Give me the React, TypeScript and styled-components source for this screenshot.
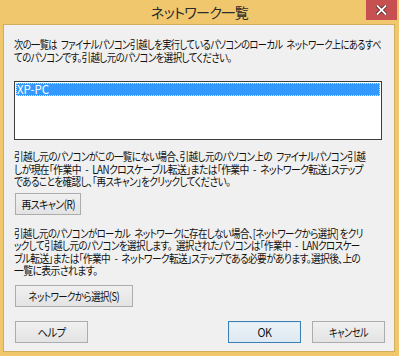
import { useLayoutEffect, useRef, useState, ReactNode } from "react"
import styled, { createGlobalStyle } from "styled-components"

const GlobalStyle = createGlobalStyle`
    html, body {
        margin: 0;
        padding: 0;
        background: #f1c76e;
    }
`

const Window = styled.div`
    width: 399px;
    height: 356px;
    box-sizing: border-box;
    overflow: hidden;
    display: flex;
    flex-direction: column;
    background: #f1c76e;
    padding: 0 4px 4px 3px;
    font-family: "Noto Sans CJK JP", "Noto Sans", sans-serif;
    font-feature-settings: "palt";
    color: #000;
`
const TitleBar = styled.div`
    height: 24px;
    display: grid;
    grid-template-columns: 1fr auto 1fr;
    align-items: start;
    margin: 0 -4px 0 -3px;
`
const Title = styled.div`
    grid-column: 2;
    font-size: 14px;
    line-height: 24px;
    color: #2a2a2a;
    letter-spacing: -0.6px;
`
const CloseButton = styled.div`
    grid-column: 3;
    justify-self: end;
    width: 31px;
    height: 20px;
    margin-right: 2px;
    background: #c75050;
    display: flex;
    align-items: center;
    justify-content: center;
`
const Body = styled.div`
    flex: 1;
    background: #f0f0f0;
    border: 1px solid #d3ad5e;
    padding: 13px 12px 0 10px;
    display: flex;
    flex-direction: column;
    align-items: flex-start;
`
const Text = styled.div<{ $top: number }>`
    margin-top: ${p => p.$top}px;
    font-size: 11.5px;
    letter-spacing: -0.7px;
    color: #111;
`
const Line = styled.div`
    height: 12.5px;
    line-height: 12.5px;
    white-space: nowrap;
`
const FitSpan = styled.span<{ $center?: boolean }>`
    display: inline-block;
    white-space: nowrap;
    transform-origin: ${p => (p.$center ? "center" : "left")} center;
`
const ListBox = styled.div`
    align-self: stretch;
    margin-top: 18px;
    height: 55px;
    border: 1px solid #3d3d3d;
    background: #fff;
    padding: 1px;
`
const ListItem = styled.div<{ $selected?: boolean }>`
    height: 13px;
    background: ${p => (p.$selected ? "#3399ff" : "transparent")};
    color: ${p => (p.$selected ? "#fff" : "#000")};
    outline: ${p => (p.$selected ? "1px dotted #cfe6ff" : "none")};
    outline-offset: -1px;
    font-size: 11.5px;
    line-height: 13px;
    padding-left: 1px;
`
const Button = styled.div<{ $width: number; $top: number; $default?: boolean }>`
    box-sizing: border-box;
    width: ${p => p.$width}px;
    height: 22px;
    margin: ${p => p.$top}px 0 0 1px;
    border: 1px solid ${p => (p.$default ? "#3c7fb1" : "#acacac")};
    box-shadow: ${p => (p.$default ? "inset 0 0 0 1px #d8ecf8" : "none")};
    background: ${p => (p.$default ? "linear-gradient(#ecf3f8, #dfe9f1)" : "linear-gradient(#f0f0f0, #e3e3e3)")};
    font-size: 11.5px;
    line-height: 20px;
    letter-spacing: -0.6px;
    color: #111;
    text-align: center;
    white-space: nowrap;
`
const Footer = styled.div`
    align-self: stretch;
    display: flex;
    gap: 10px;
    margin-top: 14px;
    margin-right: -3px;
    & > :first-child {
        margin-right: auto;
    }
`

// squeeze a line of text to the width it has in the dialog
function Fit({ width, center, children }: { width: number; center?: boolean; children: ReactNode }) {
    const ref = useRef<HTMLSpanElement>(null)
    const [scale, setScale] = useState(1)

    useLayoutEffect(() => {
        const measure = () => {
            const el = ref.current
            if (el && el.offsetWidth) setScale(width / el.offsetWidth)
        }
        measure()
        document.fonts?.ready.then(measure)
    }, [width])

    return (
        <FitSpan ref={ref} $center={center} style={{ transform: `scaleX(${scale})` }}>
            {children}
        </FitSpan>
    )
}

const S = "\u2002"

const para1: [string, number][] = [
    [`次の一覧は${S}ファイナルパソコン引越しを実行しているパソコンのローカル${S}ネットワーク上にあるすべ`, 367],
    ["てのパソコンです。引越し元のパソコンを選択してください。", 218],
]
const para2: [string, number][] = [
    [`引越し元のパソコンがこの一覧にない場合、引越し元のパソコン上の${S}ファイナルパソコン引越`, 351],
    [`しが現在「作業中${S}-${S}LANクロスケーブル転送」または「作業中${S}-${S}ネットワーク転送」ステップ`, 349],
    ["であることを確認し、「再スキャン」をクリックしてください。", 216],
]
const para3: [string, number][] = [
    [`引越し元のパソコンがローカル${S}ネットワークに存在しない場合、[ネットワークから選択] をクリ`, 349],
    [`ックして引越し元のパソコンを選択します。${S}選択されたパソコンは「作業中${S}-${S}LANクロスケー`, 346],
    [`ブル転送」または「作業中${S}-${S}ネットワーク転送」ステップである必要があります。選択後、上の`, 346],
    ["一覧に表示されます。", 83],
]

function Paragraph({ lines, top }: { lines: [string, number][]; top: number }) {
    return (
        <Text $top={top}>
            {lines.map(([line, width], i) => (
                <Line key={i}>
                    <Fit width={width}>{line}</Fit>
                </Line>
            ))}
        </Text>
    )
}

export default function App() {
    return (
        <>
            <GlobalStyle />
            <Window>
                <TitleBar>
                    <Title>ネットワーク一覧</Title>
                    <CloseButton>
                        <svg width="11" height="10" viewBox="0 0 11 10">
                            <path d="M1.5 1 L9.5 9 M9.5 1 L1.5 9" stroke="#5a2020" strokeWidth="3.4" strokeLinecap="square" />
                            <path d="M1.5 1 L9.5 9 M9.5 1 L1.5 9" stroke="#fff" strokeWidth="1.8" strokeLinecap="square" />
                        </svg>
                    </CloseButton>
                </TitleBar>
                <Body>
                    <Paragraph lines={para1} top={0} />
                    <ListBox>
                        <ListItem $selected>XP-PC</ListItem>
                    </ListBox>
                    <Paragraph lines={para2} top={10} />
                    <Button $width={66} $top={5}>
                        <Fit width={54} center>再スキャン(R)</Fit>
                    </Button>
                    <Paragraph lines={para3} top={12} />
                    <Button $width={118} $top={8}>
                        <Fit width={91} center>ネットワークから選択(S)</Fit>
                    </Button>
                    <Footer>
                        <Button $width={73} $top={0}>
                            <Fit width={28} center>ヘルプ</Fit>
                        </Button>
                        <Button $width={73} $top={0} $default>
                            <Fit width={14} center>OK</Fit>
                        </Button>
                        <Button $width={73} $top={0}>
                            <Fit width={39} center>キャンセル</Fit>
                        </Button>
                    </Footer>
                </Body>
            </Window>
        </>
    )
}
